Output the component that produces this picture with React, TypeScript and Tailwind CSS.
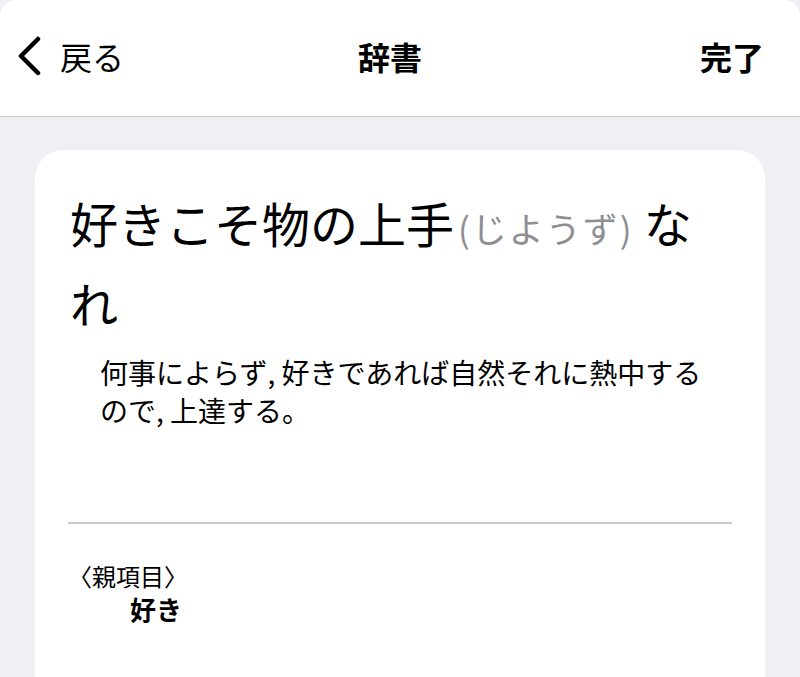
import React from 'react';

const jp = { fontFamily: '"Noto Sans CJK JP", "Noto Sans", sans-serif' };

export default function App() {
  return (
    <div className="min-h-[677px] h-[677px] overflow-hidden bg-[#efeff4] flex flex-col" style={jp}>
      {/* Header */}
      <div className="h-[117px] shrink-0 bg-white rounded-t-[16px] border-b border-[#c6c6c8] flex items-center justify-between pl-[16px] pr-[36px] pb-[5px]">
        <div className="flex items-center gap-[16px] w-[160px]">
          <svg width="28" height="40" viewBox="0 0 28 40" className="shrink-0">
            <path d="M22 3 L5 20 L22 37" fill="none" stroke="#000" strokeWidth="4.5" strokeLinecap="round" strokeLinejoin="round" />
          </svg>
          <span className="text-[32px] leading-none text-black">戻る</span>
        </div>
        <span className="text-[32px] leading-none font-bold text-black">辞書</span>
        <div className="w-[160px] flex justify-end">
          <span className="text-[32px] leading-none font-bold text-black">完了</span>
        </div>
      </div>

      {/* Content */}
      <div className="flex-1 px-[35px] pt-[33px]">
        <div className="bg-white rounded-[28px] h-[600px] pt-[32px]">
          <h1 className="pl-[35px] pr-[60px] text-[48px] leading-[80px] font-normal text-black">
            <span>好きこそ物の上手</span>
            <span className="inline-block leading-none text-[35px] tracking-[2px] text-[#8e8e93] ml-[4px] mr-[10px]">(じようず)</span>
            <span>なれ</span>
          </h1>
          <p className="mt-[11px] ml-[65px] mr-[40px] text-[28px] leading-[38px] text-black">
            何事によらず, 好きであれば自然それに熱中するので, 上達する。
          </p>
          <div className="mt-[93px] mx-[33px] h-[2px] bg-[#cbcbcb]" />
          <div className="mt-[35px] px-[33px]">
            <div className="text-[24px] leading-[33px] text-black">〈親項目〉</div>
            <div className="pl-[62px] text-[26px] leading-[34px] font-bold text-black">好き</div>
          </div>
        </div>
      </div>
    </div>
  );
}
